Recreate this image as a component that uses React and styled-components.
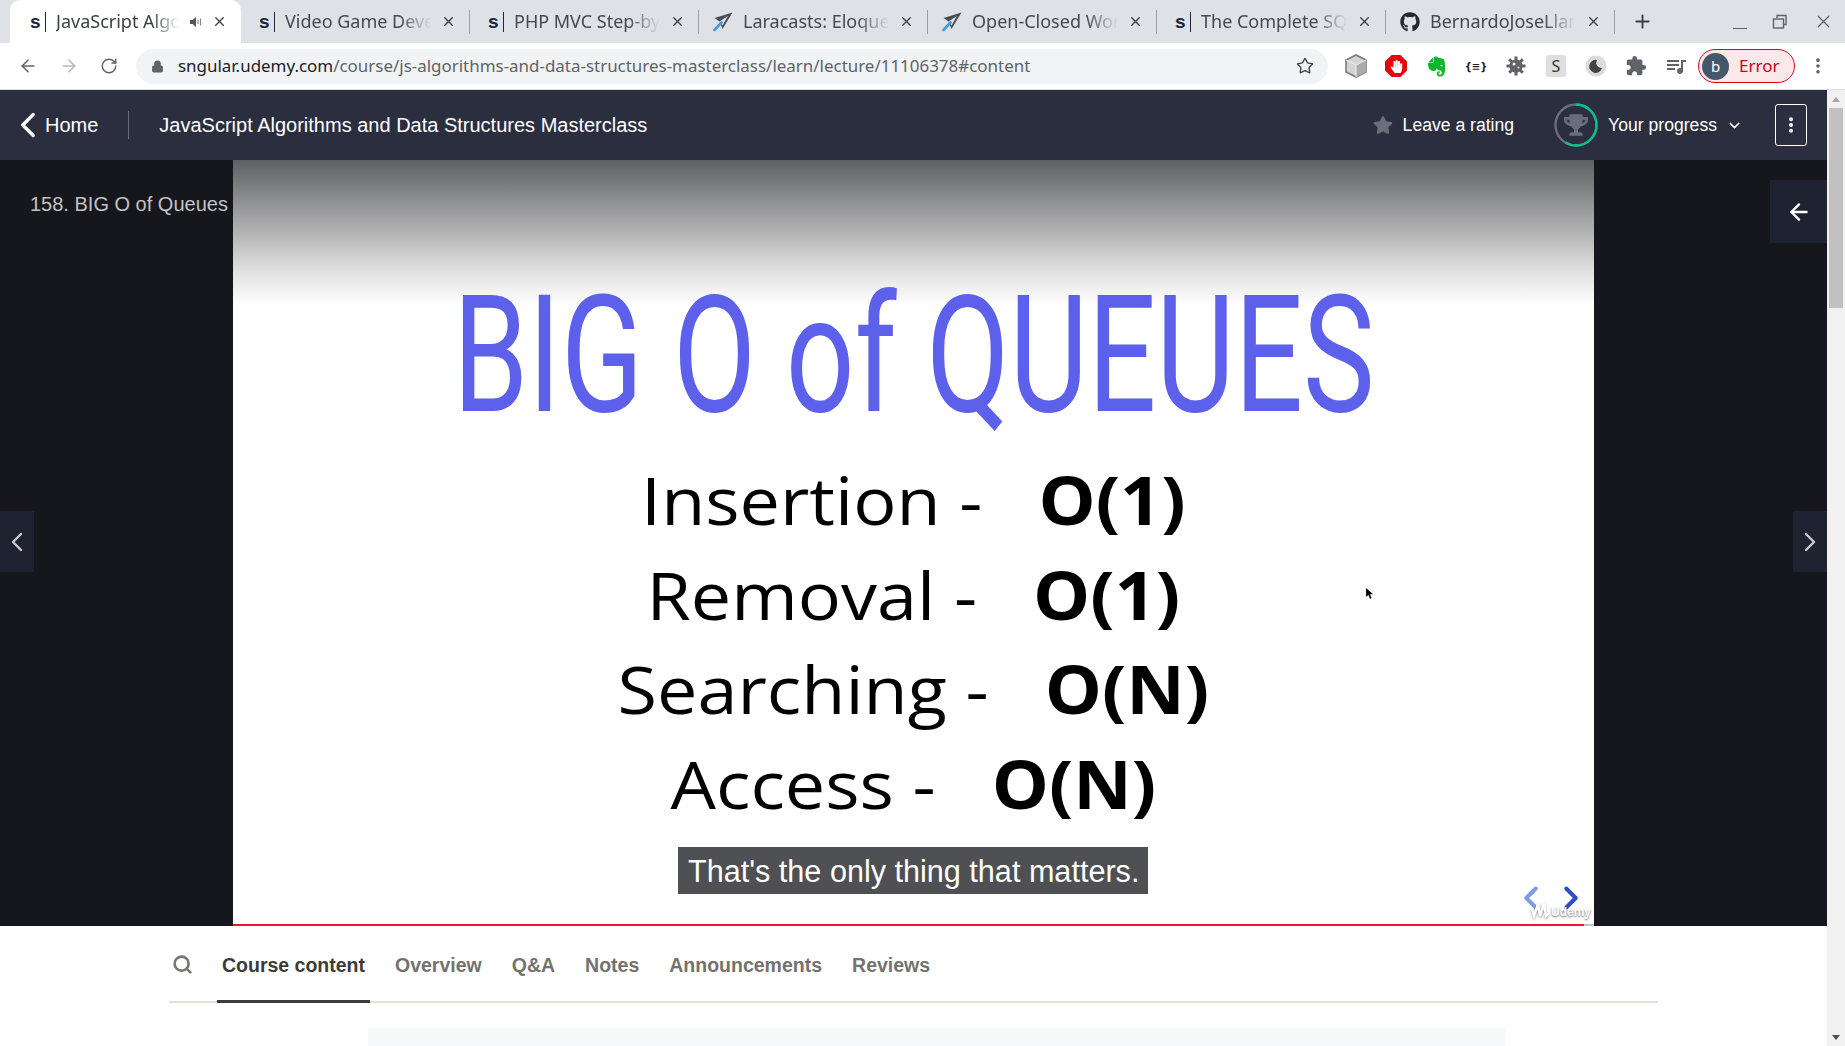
import React from 'react';
import styled, { createGlobalStyle } from 'styled-components';
import { FaGithub, FaStar, FaTrophy, FaHandPaper, FaEvernote } from 'react-icons/fa';
import { MdExtension, MdQueueMusic } from 'react-icons/md';
import { ArrowLeft, ArrowRight, RotateCw, Lock, Star, X, Plus, ChevronLeft, ChevronRight, ChevronDown, Search, MoreVertical } from 'lucide-react';

const GlobalStyle = createGlobalStyle`
  html, body {
    margin: 0;
    padding: 0;
    height: 100%;
    overflow: hidden;
    background: #fff;
    font-family: "Liberation Sans", Arial, sans-serif;
  }
  * { box-sizing: border-box; }
`;

const TABS = [
  { title: 'JavaScript Algorithms', icon: 'udemy', active: true, sound: true },
  { title: 'Video Game Development', icon: 'udemy' },
  { title: 'PHP MVC Step-by-Step', icon: 'udemy' },
  { title: 'Laracasts: Eloquent', icon: 'plane' },
  { title: 'Open-Closed Workflow', icon: 'plane' },
  { title: 'The Complete SQL', icon: 'udemy' },
  { title: 'BernardoJoseLlanos', icon: 'github' },
];

const LINES = [
  { label: 'Insertion -', value: 'O(1)' },
  { label: 'Removal -', value: 'O(1)' },
  { label: 'Searching -', value: 'O(N)' },
  { label: 'Access -', value: 'O(N)' },
];

const SECTIONS = ['Course content', 'Overview', 'Q&A', 'Notes', 'Announcements', 'Reviews'];

function PlaneIcon() {
  return (
    <svg width="20" height="20" viewBox="0 0 20 20">
      <path d="M19.5 0.5 L1.5 6 L6.5 9.5 L9.5 17 Z M15 4 L6.5 9.5 L9.5 13.5 Z" fill="#4a4d55" fillRule="evenodd" />
      <path d="M8.5 10.5 L1.5 18" stroke="#3d9be9" strokeWidth="2.6" strokeLinecap="round" />
    </svg>
  );
}

function Favicon({ kind }) {
  if (kind === 'udemy') return <UdemyMark>s</UdemyMark>;
  if (kind === 'plane') return <FaviconBox><PlaneIcon /></FaviconBox>;
  return <FaviconBox><FaGithub size={20} color="#24292e" /></FaviconBox>;
}

function Speaker() {
  return (
    <svg width="13" height="12" viewBox="0 0 13 12">
      <path d="M1 4 H3.5 L7 1 V11 L3.5 8 H1 Z" fill="#555" />
      <path d="M9 4 V8 M11.5 2.5 V9.5" stroke="#888" strokeWidth="1.2" />
    </svg>
  );
}

function TabStrip() {
  return (
    <Strip>
      {TABS.map((tab) => (
        <Tab key={tab.title} $active={tab.active}>
          <Favicon kind={tab.icon} />
          <TabTitle>{tab.title}</TabTitle>
          {tab.sound && <Speaker />}
          <TabClose><X size={15} strokeWidth={2.2} /></TabClose>
        </Tab>
      ))}
      <NewTab><Plus size={21} strokeWidth={2.2} /></NewTab>
      <WindowControls>
        <MinimizeBar />
        <svg width="16" height="16" viewBox="0 0 16 16" fill="none" stroke="#5f6368" strokeWidth="1.4">
          <path d="M5 4 V1.5 H14 V10.5 H11.5" />
          <rect x="1.5" y="5" width="10" height="9" />
        </svg>
        <X size={21} strokeWidth={1.4} />
      </WindowControls>
    </Strip>
  );
}

function CubeIcon() {
  return (
    <svg width="22" height="24" viewBox="0 0 22 24">
      <path d="M11 1 L21 6 V18 L11 23 L1 18 V6 Z" fill="#d3d3d3" stroke="#77797c" strokeWidth="1.6" />
      <path d="M11 11 L21 6 V18 L11 23 Z" fill="#a9abad" />
      <path d="M1 6 L11 11 L21 6 M11 11 V23" fill="none" stroke="#f0f0f0" strokeWidth="1" />
    </svg>
  );
}

function GearIcon() {
  return (
    <svg width="20" height="20" viewBox="0 0 20 20">
      <circle cx="10" cy="10" r="6.6" fill="#5f6368" />
      <g stroke="#5f6368" strokeWidth="3">
        <path d="M10 0.5 V19.5 M0.5 10 H19.5 M3.2 3.2 L16.8 16.8 M16.8 3.2 L3.2 16.8" />
      </g>
      <circle cx="8" cy="8" r="1.5" fill="#fff" />
      <circle cx="12.5" cy="11.5" r="1" fill="#fff" />
    </svg>
  );
}

function MoonIcon() {
  return (
    <svg width="22" height="22" viewBox="0 0 22 22">
      <circle cx="11" cy="11" r="10.5" fill="#dcdcdc" />
      <path d="M12 5 A6.5 6.5 0 1 0 17 13 A5.2 5.2 0 0 1 12 5 Z" fill="#444" />
    </svg>
  );
}

function Toolbar() {
  return (
    <ToolbarRow>
      <NavIcons>
        <ArrowLeft size={20} color="#5f6368" strokeWidth={1.8} />
        <ArrowRight size={20} color="#b4b6b9" strokeWidth={1.8} />
        <RotateCw size={18} color="#5f6368" strokeWidth={1.9} />
      </NavIcons>
      <Omnibox>
        <Lock size={13} fill="#5f6368" color="#5f6368" strokeWidth={2} />
        <Url><b>sngular.udemy.com</b>/course/js-algorithms-and-data-structures-masterclass/learn/lecture/11106378#content</Url>
        <Star size={18} color="#3c4043" strokeWidth={1.8} />
      </Omnibox>
      <Extensions>
        <ExtSlot><CubeIcon /></ExtSlot>
        <ExtSlot><Octagon><FaHandPaper size={13} color="#fff" /></Octagon></ExtSlot>
        <ExtSlot><FaEvernote size={23} color="#14b52e" /></ExtSlot>
        <ExtSlot><JsonMark>{'{≡}'}</JsonMark></ExtSlot>
        <ExtSlot><GearIcon /></ExtSlot>
        <ExtSlot><SBox>S</SBox></ExtSlot>
        <ExtSlot><MoonIcon /></ExtSlot>
        <ExtSlot><MdExtension size={22} color="#5f6368" /></ExtSlot>
        <ExtSlot><MdQueueMusic size={24} color="#5f6368" /></ExtSlot>
      </Extensions>
      <ProfilePill>
        <Avatar>b</Avatar>
        <span>Error</span>
      </ProfilePill>
      <ChromeMenu><MoreVertical size={20} color="#5f6368" strokeWidth={2.4} /></ChromeMenu>
    </ToolbarRow>
  );
}

function ProgressRing() {
  return (
    <RingBox>
      <svg width="44" height="44" viewBox="0 0 44 44">
        <circle cx="22" cy="22" r="20.5" fill="none" stroke="#686f7a" strokeWidth="2.4" />
        <circle cx="22" cy="22" r="20.5" fill="none" stroke="#00c389" strokeWidth="2.4"
          strokeDasharray="75 129" transform="rotate(-90 22 22)" />
      </svg>
      <RingTrophy><FaTrophy size={24} color="#686f7a" /></RingTrophy>
    </RingBox>
  );
}

function CourseNav() {
  return (
    <NavBar>
      <HomeLink>
        <HomeChevron><ChevronLeft size={42} strokeWidth={1.9} /></HomeChevron>
        <span>Home</span>
      </HomeLink>
      <NavDivider />
      <CourseTitle>JavaScript Algorithms and Data Structures Masterclass</CourseTitle>
      <RatingLink>
        <FaStar size={20} color="#686f7a" />
        <span>Leave a rating</span>
      </RatingLink>
      <ProgressLink>
        <ProgressRing />
        <span>Your progress</span>
        <ProgressCaret><ChevronDown size={17} strokeWidth={2} /></ProgressCaret>
      </ProgressLink>
      <KebabButton><MoreVertical size={20} strokeWidth={2.8} /></KebabButton>
    </NavBar>
  );
}

function Player() {
  return (
    <PlayerArea>
      <SidePane><LectureName>158. BIG O of Queues</LectureName></SidePane>
      <Slide>
        <SlideTitle>BIG O of QUEUES</SlideTitle>
        <SlideLines>
          {LINES.map((line) => (
            <SlideLine key={line.label}>
              {line.label}{'   '}<strong>{line.value}</strong>
            </SlideLine>
          ))}
        </SlideLines>
        <Caption>That's the only thing that matters.</Caption>
        <SlideArrows>
          <ChevronLeft size={38} strokeWidth={2.5} color="#7f9be8" />
          <ChevronRight size={38} strokeWidth={2.5} color="#2e4bc8" />
        </SlideArrows>
        <Watermark>
          <svg width="18" height="17" viewBox="0 0 18 17" fill="none" stroke="#fff" strokeWidth="2.4" strokeLinecap="round">
            <path d="M1 8 L3 14 L7 2 L9 14 L13 2 L15 14 L17 12" />
          </svg>
          Udemy
        </Watermark>
        <ProgressTrack><ProgressFill /></ProgressTrack>
        <Cursor viewBox="0 0 10 14" width="8" height="11"><path d="M0 0 L9 8 H5 L7 13 L5 13.6 L3 9 L0 11 Z" fill="#000" /></Cursor>
      </Slide>
      <SidePane />
      <PrevButton><ChevronLeft size={32} strokeWidth={1.8} /></PrevButton>
      <NextButton><ChevronRight size={32} strokeWidth={1.8} /></NextButton>
      <SidebarToggle><ArrowLeft size={26} strokeWidth={2.2} /></SidebarToggle>
    </PlayerArea>
  );
}

function Sections() {
  return (
    <SectionBar>
      <SearchSlot><Search size={21} strokeWidth={3} /></SearchSlot>
      {SECTIONS.map((name, i) => (
        <SectionTab key={name} $active={i === 0}>{name}</SectionTab>
      ))}
    </SectionBar>
  );
}

export default function App() {
  return (
    <Frame>
      <GlobalStyle />
      <TabStrip />
      <Toolbar />
      <Body>
        <Page>
          <CourseNav />
          <Player />
          <Sections />
          <ContentStrip />
        </Page>
        <Scrollbar>
          <ScrollUp />
          <ScrollThumb />
          <ScrollDown />
        </Scrollbar>
      </Body>
    </Frame>
  );
}

const Frame = styled.div`
  width: 1845px;
  height: 1046px;
  display: flex;
  flex-direction: column;
  overflow: hidden;
`;

const Strip = styled.div`
  height: 43px;
  flex: none;
  background: #dee1e6;
  padding-left: 12px;
  display: flex;
  align-items: stretch;
`;

const Tab = styled.div`
  position: relative;
  width: 229px;
  flex: none;
  display: flex;
  align-items: center;
  padding: 0 14px 0 18px;
  gap: 10px;
  color: #45484d;
  font-family: "Noto Sans", sans-serif;
  font-size: 18px;
  &::after {
    content: '';
    position: absolute;
    right: 0;
    top: 10px;
    bottom: 9px;
    width: 1px;
    background: #9a9da3;
  }
  ${(p) => p.$active && `
    background: #fff;
    margin-left: -2px;
    width: 231px;
    padding-left: 20px;
    border-radius: 10px 10px 0 0;
    color: #3c4043;
    &::after { display: none; }
  `}
`;

const UdemyMark = styled.span`
  flex: none;
  width: 16px;
  height: 20px;
  line-height: 19px;
  font-family: "Liberation Sans", sans-serif;
  font-weight: 700;
  font-size: 19px;
  color: #1c2540;
  border-right: 1px solid #1c2540;
`;

const FaviconBox = styled.span`
  flex: none;
  width: 20px;
  height: 20px;
  display: flex;
  margin: 0 0 0 -4px;
`;

const TabTitle = styled.span`
  flex: 1;
  min-width: 0;
  overflow: hidden;
  white-space: nowrap;
  line-height: 24px;
  margin-bottom: 2px;
  -webkit-mask-image: linear-gradient(to right, #000 78%, transparent 100%);
  mask-image: linear-gradient(to right, #000 78%, transparent 100%);
`;

const TabClose = styled.span`
  flex: none;
  display: flex;
  color: #3c4043;
`;

const NewTab = styled.span`
  display: flex;
  align-items: center;
  margin-left: 17px;
  color: #3c4043;
`;

const WindowControls = styled.div`
  margin-left: auto;
  width: 112px;
  padding-right: 11px;
  display: flex;
  align-items: center;
  justify-content: space-between;
  color: #5f6368;
`;

const MinimizeBar = styled.span`
  width: 14px;
  height: 1.5px;
  margin-top: 14px;
  background: #5f6368;
`;

const ToolbarRow = styled.div`
  height: 47px;
  flex: none;
  background: #fff;
  border-bottom: 1px solid #dadce0;
  display: flex;
  align-items: center;
`;

const NavIcons = styled.div`
  width: 136px;
  flex: none;
  padding: 0 18px;
  display: flex;
  align-items: center;
  justify-content: space-between;
`;

const Omnibox = styled.div`
  width: 1192px;
  height: 35px;
  flex: none;
  border-radius: 18px;
  background: #f1f3f4;
  padding: 0 14px 0 15px;
  display: flex;
  align-items: center;
`;

const Url = styled.div`
  flex: 1;
  margin: 0 0 2px 14px;
  font-family: "Noto Sans", sans-serif;
  font-size: 16.95px;
  color: #5f6368;
  white-space: nowrap;
  & b {
    font-weight: 400;
    color: #202124;
  }
`;

const Extensions = styled.div`
  margin-left: 8px;
  display: flex;
  align-items: center;
`;

const ExtSlot = styled.span`
  width: 40px;
  flex: none;
  display: flex;
  justify-content: center;
  align-items: center;
`;

const Octagon = styled.span`
  width: 22px;
  height: 22px;
  background: #e8000d;
  clip-path: polygon(30% 0, 70% 0, 100% 30%, 100% 70%, 70% 100%, 30% 100%, 0 70%, 0 30%);
  display: flex;
  align-items: center;
  justify-content: center;
`;

const JsonMark = styled.span`
  font-family: "DejaVu Sans", sans-serif;
  font-size: 10px;
  font-weight: 700;
  color: #222;
`;

const SBox = styled.span`
  width: 20px;
  height: 22px;
  background: #dedede;
  border-radius: 3px;
  text-align: center;
  font-family: "Noto Sans", sans-serif;
  font-size: 16px;
  line-height: 22px;
  color: #333;
`;

const ProfilePill = styled.div`
  margin-left: 2px;
  width: 97px;
  height: 34px;
  flex: none;
  border: 1px solid #d4051e;
  border-radius: 17px;
  background: #fce8e8;
  padding-left: 3px;
  display: flex;
  align-items: center;
  gap: 10px;
  color: #c5061c;
  font-family: "Noto Sans", sans-serif;
  font-size: 17px;
  line-height: 28px;
`;

const Avatar = styled.span`
  width: 27px;
  height: 27px;
  border-radius: 50%;
  background: #44586a;
  color: #fff;
  text-align: center;
  line-height: 26px;
  font-size: 15px;
`;

const ChromeMenu = styled.span`
  margin-left: 13px;
  display: flex;
`;

const Body = styled.div`
  flex: 1;
  min-height: 0;
  display: flex;
`;

const Page = styled.div`
  flex: 1;
  min-width: 0;
  background: #fff;
`;

const NavBar = styled.header`
  height: 70px;
  background: #2b2e3f;
  color: #fff;
  padding: 0 20px 0 7px;
  display: flex;
  align-items: center;
  font-size: 20px;
`;

const HomeLink = styled.div`
  display: flex;
  align-items: center;
`;

const HomeChevron = styled.span`
  display: flex;
  margin-right: -4px;
`;

const NavDivider = styled.span`
  width: 1px;
  height: 28px;
  margin: 0 30px;
  background: #686f7a;
`;

const CourseTitle = styled.div`
  flex: 1;
`;

const RatingLink = styled.div`
  display: flex;
  align-items: center;
  gap: 10px;
  font-size: 17.6px;
`;

const ProgressLink = styled.div`
  margin-left: 40px;
  display: flex;
  align-items: center;
  gap: 10px;
  font-size: 17.6px;
`;

const ProgressCaret = styled.span`
  display: flex;
  margin-left: -1px;
`;

const RingBox = styled.span`
  position: relative;
  width: 44px;
  height: 44px;
  display: block;
`;

const RingTrophy = styled.span`
  position: absolute;
  inset: 0;
  display: flex;
  align-items: center;
  justify-content: center;
`;

const KebabButton = styled.div`
  width: 32px;
  height: 42px;
  margin-left: 32px;
  border: 1px solid #fff;
  border-radius: 3px;
  display: flex;
  align-items: center;
  justify-content: center;
`;

const PlayerArea = styled.section`
  position: relative;
  height: 766px;
  background: #16171c;
  display: flex;
`;

const SidePane = styled.div`
  flex: 1;
  min-width: 0;
`;

const LectureName = styled.div`
  padding: 33px 0 0 30px;
  font-size: 20px;
  color: #c2c2c4;
  white-space: nowrap;
`;

const Slide = styled.div`
  position: relative;
  width: 1361px;
  flex: none;
  overflow: hidden;
  background: linear-gradient(to bottom, #5f6063 0, #bcbcbd 80px, #e2e2e3 112px, #fff 146px);
  display: flex;
  flex-direction: column;
  align-items: center;
`;

const SlideTitle = styled.h1`
  margin: 101px 0 0;
  font-family: Roboto, sans-serif;
  font-weight: 400;
  font-size: 163px;
  line-height: 190px;
  color: #5c60ea;
  white-space: nowrap;
  transform: scaleX(0.74);
`;

const SlideLines = styled.div`
  margin-top: 1px;
  display: flex;
  flex-direction: column;
  align-items: center;
  transform: scaleX(1.09);
`;

const SlideLine = styled.div`
  font-family: "Open Sans", sans-serif;
  font-size: 66px;
  line-height: 94.5px;
  color: #000;
  white-space: pre;
`;

const Caption = styled.div`
  position: absolute;
  left: 445px;
  bottom: 32px;
  height: 47px;
  padding: 0 9px 0 10px;
  background: rgba(60, 61, 65, 0.9);
  color: #fff;
  font-size: 30.6px;
  line-height: 48px;
  white-space: nowrap;
`;

const SlideArrows = styled.div`
  position: absolute;
  right: 4px;
  bottom: 9px;
  display: flex;
  gap: 2px;
`;

const Watermark = styled.span`
  position: absolute;
  right: 3px;
  bottom: 7px;
  display: flex;
  align-items: flex-end;
  gap: 2px;
  color: #fff;
  font-size: 12px;
  font-weight: 700;
  text-shadow: 0 1px 2px rgba(0, 0, 0, 0.6);
  & svg { filter: drop-shadow(0 1px 1px rgba(0, 0, 0, 0.45)); }
`;

const ProgressTrack = styled.div`
  position: absolute;
  left: 0;
  right: 0;
  bottom: 0;
  height: 2px;
  background: #c4c4c4;
`;

const ProgressFill = styled.div`
  height: 100%;
  width: 1351px;
  background: #e11d2a;
`;

const Cursor = styled.svg`
  position: absolute;
  left: 1133px;
  top: 428px;
`;

const PagerButton = styled.div`
  position: absolute;
  top: 351px;
  width: 34px;
  height: 61px;
  background: #1f2230;
  color: #ccc;
  display: flex;
  align-items: center;
  justify-content: center;
`;

const PrevButton = styled(PagerButton)`
  left: 0;
`;

const NextButton = styled(PagerButton)`
  right: 0;
`;

const SidebarToggle = styled.div`
  position: absolute;
  top: 20px;
  right: 0;
  width: 57px;
  height: 63px;
  background: #1f2230;
  color: #fff;
  display: flex;
  align-items: center;
  justify-content: center;
`;

const SectionBar = styled.nav`
  height: 77px;
  margin: 0 169px;
  border-bottom: 2px solid #e0e0d6;
  display: flex;
  align-items: stretch;
`;

const SearchSlot = styled.div`
  width: 48px;
  padding: 2px 0 0 3px;
  display: flex;
  align-items: center;
  color: #77776f;
`;

const SectionTab = styled.div`
  margin-right: 20px;
  margin-bottom: -2px;
  padding: 4px 5px 0;
  display: flex;
  align-items: center;
  font-size: 19.5px;
  font-weight: 700;
  color: ${(p) => (p.$active ? '#3c3b37' : '#73726c')};
  border-bottom: 3px solid ${(p) => (p.$active ? '#3c3b37' : 'transparent')};
`;

const ContentStrip = styled.div`
  width: 1137px;
  height: 18px;
  margin: 25px 0 0 368px;
  background: #f7f8fa;
`;

const Scrollbar = styled.aside`
  width: 18px;
  flex: none;
  background: #f1f1f1;
  display: flex;
  flex-direction: column;
  align-items: center;
`;

const ScrollUp = styled.span`
  margin-top: 7px;
  border: 4.5px solid transparent;
  border-top: 0;
  border-bottom: 5px solid #a3a3a3;
`;

const ScrollThumb = styled.div`
  width: 14px;
  height: 200px;
  margin-top: 6px;
  background: #c1c1c1;
`;

const ScrollDown = styled.span`
  margin-top: auto;
  margin-bottom: 6px;
  border: 4.5px solid transparent;
  border-bottom: 0;
  border-top: 5px solid #505050;
`;
